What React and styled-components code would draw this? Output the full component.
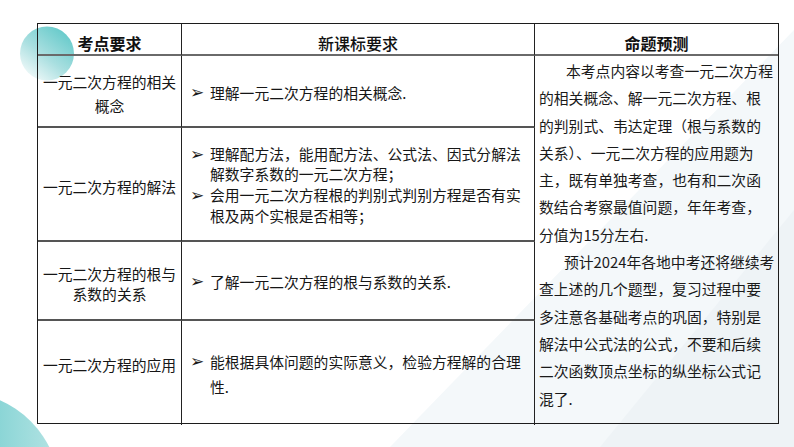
import React from "react";
import styled, { createGlobalStyle } from "styled-components";

const Global = createGlobalStyle`
  html, body { margin: 0; padding: 0; background: #ffffff; }
  body { font-family: "Noto Sans CJK SC", "Noto Sans", sans-serif; color: #111; }
`;

const Page = styled.div`
  position: relative;
  width: 794px;
  height: 447px;
  overflow: hidden;
  background: #ffffff;
  padding: 23px 0 0 37px;
  box-sizing: border-box;
`;

const Decor = styled.svg`
  position: absolute;
  left: 0;
  top: 0;
  width: 794px;
  height: 447px;
  z-index: 0;
`;

const Table = styled.div`
  position: relative;
  z-index: 1;
  display: grid;
  grid-template-columns: 144px 353px 1fr;
  grid-template-rows: 32px 72px 114px 79px 104px;
  width: 742px;
  height: 401px;
  box-sizing: border-box;
  border: 1px solid #1c1c1c;
  font-size: 14.8px;
`;

const HeadCell = styled.div`
  display: flex;
  align-items: center;
  justify-content: center;
  padding-top: 7px;
  box-sizing: border-box;
  border-bottom: 2px solid #6a6a6a;
  border-right: ${(p) => (p.$last ? "none" : "1px solid #222")};
  font-size: 16px;
  font-weight: ${(p) => (p.$bold ? 700 : 500)};
  color: #111;
  line-height: 1;
`;

const NameCell = styled.div`
  display: flex;
  align-items: center;
  justify-content: center;
  text-align: center;
  box-sizing: border-box;
  padding: ${(p) => p.$pad || "6px 2px 0"};
  border-right: 1px solid #222;
  border-bottom: ${(p) => (p.$last ? "none" : "2px solid #555")};
  line-height: ${(p) => p.$lh || 22}px;
  color: #161616;
`;

const ReqCell = styled.div`
  display: flex;
  flex-direction: column;
  justify-content: center;
  box-sizing: border-box;
  padding: 2px 4px 0 8px;
  border-right: 1px solid #222;
  border-bottom: ${(p) => (p.$last ? "none" : "2px solid #555")};
  line-height: ${(p) => p.$lh || 21}px;
  color: #161616;
`;

const Item = styled.div`
  display: flex;
  align-items: flex-start;
`;

const Bullet = styled.span`
  flex: 0 0 20px;
  font-family: "DejaVu Sans", sans-serif;
  font-size: 17px;
  color: #1a1a1a;
`;

const ItemText = styled.span`
  flex: 1;
`;

const PredictCell = styled.div`
  grid-column: 3;
  grid-row: 2 / 6;
  box-sizing: border-box;
  padding: 1px 3px 0 4px;
  line-height: 27.3px;
  color: #1a1a1a;
`;

const Para = styled.p`
  margin: 0;
  text-indent: ${(p) => p.$indent || 27}px;
`;

const rows = [
  {
    name: ["一元二次方程的相关", "概念"],
    nameLh: 24,
    items: ["理解一元二次方程的相关概念."],
  },
  {
    name: ["一元二次方程的解法"],
    items: [
      "理解配方法，能用配方法、公式法、因式分解法解数字系数的一元二次方程；",
      "会用一元二次方程根的判别式判别方程是否有实根及两个实根是否相等；",
    ],
    lh: 20.7,
  },
  {
    name: ["一元二次方程的根与", "系数的关系"],
    nameLh: 20,
    items: ["了解一元二次方程的根与系数的关系."],
  },
  {
    name: ["一元二次方程的应用"],
    namePad: "0 2px 16px",
    items: ["能根据具体问题的实际意义，检验方程解的合理性."],
    lh: 25,
    last: true,
  },
];

export default function App() {
  return (
    <>
      <Global />
      <Page>
        <Decor viewBox="0 0 794 447">
          <defs>
            <linearGradient id="tl" x1="0.85" y1="0.05" x2="0.15" y2="0.95">
              <stop offset="0" stopColor="#62c9c9" />
              <stop offset="0.55" stopColor="#a9dfe0" />
              <stop offset="1" stopColor="#f3fafa" />
            </linearGradient>
            <linearGradient id="bl" x1="0" y1="0.5" x2="1" y2="0.5">
              <stop offset="0" stopColor="#4fbfc2" />
              <stop offset="0.5" stopColor="#6fcccd" />
              <stop offset="1" stopColor="#b6e4e4" />
            </linearGradient>
          </defs>
          <polygon points="390,447 794,30 794,447" fill="#f4f8fa" />
          <polygon points="600,447 794,210 794,447" fill="#eef3f6" />
          <circle cx="47" cy="53.5" r="27" fill="url(#tl)" />
          <circle cx="-40" cy="492" r="100" fill="url(#bl)" />
        </Decor>
        <Table>
          <HeadCell $bold>考点要求</HeadCell>
          <HeadCell>新课标要求</HeadCell>
          <HeadCell $bold $last>命题预测</HeadCell>
          {rows.map((r, i) => (
            <React.Fragment key={i}>
              <NameCell
                style={{ gridRow: i + 2, gridColumn: 1 }}
                $lh={r.nameLh}
                $pad={r.namePad}
                $last={r.last}
              >
                <div>
                  {r.name.map((n, j) => (
                    <div key={j}>{n}</div>
                  ))}
                </div>
              </NameCell>
              <ReqCell style={{ gridRow: i + 2, gridColumn: 2 }} $lh={r.lh} $last={r.last}>
                {r.items.map((t, j) => (
                  <Item key={j}>
                    <Bullet>➢</Bullet>
                    <ItemText>{t}</ItemText>
                  </Item>
                ))}
              </ReqCell>
            </React.Fragment>
          ))}
          <PredictCell>
            <Para>
              本考点内容以考查一元二次方程的相关概念、解一元二次方程、根的判别式、韦达定理（根与系数的关系）、一元二次方程的应用题为主，既有单独考查，也有和二次函数结合考察最值问题，年年考查，分值为15分左右.
            </Para>
            <Para $indent={25}>
              预计2024年各地中考还将继续考查上述的几个题型，复习过程中要多注意各基础考点的巩固，特别是解法中公式法的公式，不要和后续二次函数顶点坐标的纵坐标公式记混了.
            </Para>
          </PredictCell>
        </Table>
      </Page>
    </>
  );
}
